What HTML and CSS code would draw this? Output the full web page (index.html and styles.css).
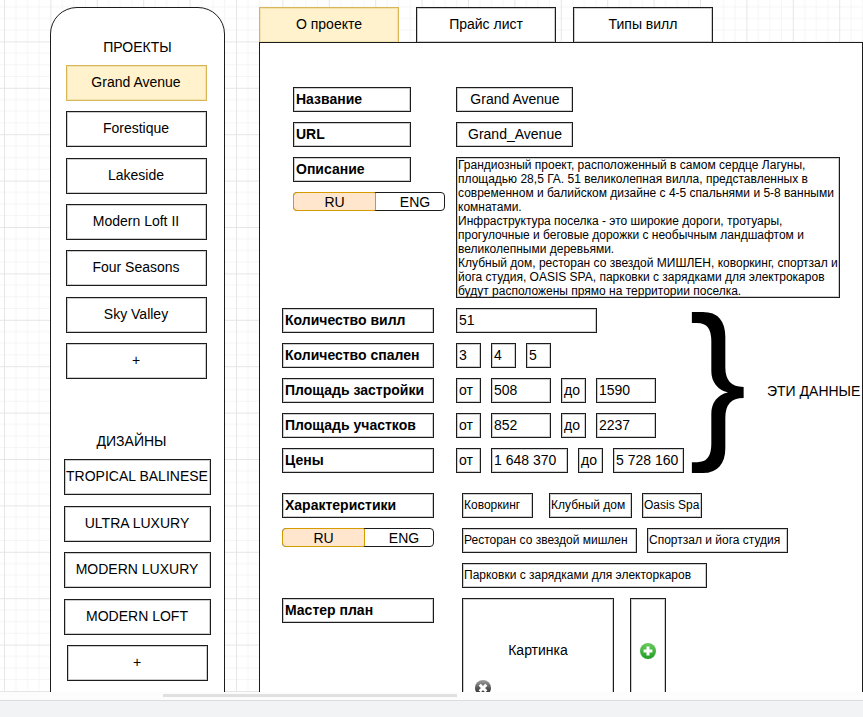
FILE: index.html
```html
<!DOCTYPE html>
<html lang="ru">
<head>
<meta charset="utf-8">
<title>Grand Avenue</title>
<link rel="stylesheet" href="styles.css">
</head>
<body>
<div class="canvas">
  <svg class="grid-lines" aria-hidden="true">
    <defs>
      <pattern id="grid" x="4" y="-5" width="46.4" height="46.4" patternUnits="userSpaceOnUse">
        <path d="M11.9 0V46.4M23.5 0V46.4M35.1 0V46.4M0 11.9H46.4M0 23.5H46.4M0 35.1H46.4" stroke="#f5f5f5" fill="none"/>
        <path d="M.5 0V46.4M0 .5H46.4" stroke="#e6e6e6" fill="none"/>
      </pattern>
    </defs>
    <rect width="100%" height="100%" fill="url(#grid)"/>
  </svg>

  <nav class="sidebar">
    <h2 class="sidebar-title">ПРОЕКТЫ</h2>
    <div class="menu menu-projects">
      <button class="box item active">Grand Avenue</button>
      <button class="box item">Forestique</button>
      <button class="box item">Lakeside</button>
      <button class="box item">Modern Loft II</button>
      <button class="box item">Four Seasons</button>
      <button class="box item">Sky Valley</button>
      <button class="box item" aria-label="Добавить проект">+</button>
    </div>
    <h2 class="sidebar-title designs-title">ДИЗАЙНЫ</h2>
    <div class="menu menu-designs">
      <button class="box item wide">TROPICAL BALINESE</button>
      <button class="box item wide">ULTRA LUXURY</button>
      <button class="box item wide">MODERN LUXURY</button>
      <button class="box item wide">MODERN LOFT</button>
      <button class="box item" aria-label="Добавить дизайн">+</button>
    </div>
  </nav>

  <main class="main">
    <div class="tabs">
      <button class="box item active">О проекте</button>
      <button class="box item">Прайс лист</button>
      <button class="box item">Типы вилл</button>
    </div>
    <form class="panel">
      <section class="section general">
        <div class="stack">
          <label class="box label" for="name">Название</label>
          <label class="box label" for="url">URL</label>
          <label class="box label" for="about">Описание</label>
          <div class="toggle">
            <button type="button" class="lang selected">RU</button>
            <button type="button" class="lang">ENG</button>
          </div>
        </div>
        <div class="stack">
          <input class="box field centered" id="name" value="Grand Avenue">
          <input class="box field centered" id="url" value="Grand_Avenue">
          <textarea class="box about" id="about" rows="10">Грандиозный проект, расположенный в самом сердце Лагуны,
площадью 28,5 ГА. 51 великолепная вилла, представленных в
современном и балийском дизайне с 4-5 спальнями и 5-8 ванными
комнатами.
Инфраструктура поселка - это широкие дороги, тротуары,
прогулочные и беговые дорожки с необычным ландшафтом и
великолепными деревьями.
Клубный дом, ресторан со звездой МИШЛЕН, коворкинг, спортзал и
йога студия, OASIS SPA, парковки с зарядками для электрокаров
будут расположены прямо на территории поселка.</textarea>
        </div>
      </section>

      <section class="section numbers">
        <div class="stack">
          <label class="box label" for="villas">Количество вилл</label>
          <label class="box label" for="bedrooms">Количество спален</label>
          <label class="box label" for="built">Площадь застройки</label>
          <label class="box label" for="plot">Площадь участков</label>
          <label class="box label" for="price">Цены</label>
        </div>
        <div class="stack values">
          <div class="row"><input class="box field large" id="villas" value="51"></div>
          <div class="row">
            <input class="box field tiny" id="bedrooms" value="3">
            <input class="box field tiny" aria-label="Спальни" value="4">
            <input class="box field tiny" aria-label="Спальни" value="5">
          </div>
          <div class="row">
            <span class="box tiny">от</span><input class="box field small" id="built" value="508">
            <span class="box tiny">до</span><input class="box field small" aria-label="Площадь застройки до" value="1590">
          </div>
          <div class="row">
            <span class="box tiny">от</span><input class="box field small" id="plot" value="852">
            <span class="box tiny">до</span><input class="box field small" aria-label="Площадь участков до" value="2237">
          </div>
          <div class="row">
            <span class="box tiny">от</span><input class="box field price-from" id="price" value="1 648 370">
            <span class="box tiny">до</span><input class="box field price-to" aria-label="Цены до" value="5 728 160">
          </div>
        </div>
        <div class="brace">}</div>
        <p class="note">ЭТИ ДАННЫЕ</p>
      </section>

      <section class="section features">
        <div class="stack">
          <div class="box label">Характеристики</div>
          <div class="toggle">
            <button type="button" class="lang selected">RU</button>
            <button type="button" class="lang">ENG</button>
          </div>
        </div>
        <div class="stack">
          <div class="row">
            <span class="box chip coworking">Коворкинг</span>
            <span class="box chip club">Клубный дом</span>
            <span class="box chip spa">Oasis Spa</span>
          </div>
          <div class="row">
            <span class="box chip restaurant">Ресторан со звездой мишлен</span>
            <span class="box chip sport">Спортзал и йога студия</span>
          </div>
          <div class="row"><span class="box chip parking">Парковки с зарядками для электоркаров</span></div>
        </div>
      </section>

      <section class="section plan">
        <div class="stack"><div class="box label">Мастер план</div></div>
        <div class="pictures">
          <div class="box picture">Картинка
            <button type="button" class="icon-button remove" aria-label="Удалить">
              <svg viewBox="0 0 16 16" width="16" height="16">
                <defs><linearGradient id="grey" x2="0" y2="1"><stop stop-color="#a0a0a0"/><stop offset=".6" stop-color="#4a4a4a"/><stop offset="1" stop-color="#333"/></linearGradient></defs>
                <circle cx="8" cy="8" r="8" fill="url(#grey)"/>
                <path d="M4.7 4.7L11.3 11.3M11.3 4.7L4.7 11.3" stroke="#fff" stroke-width="3"/>
              </svg>
            </button>
          </div>
          <button type="button" class="box add" aria-label="Добавить">
            <svg viewBox="0 0 16 16" width="16" height="16">
              <defs><linearGradient id="green" x2="0" y2="1"><stop stop-color="#6ccb62"/><stop offset="1" stop-color="#1f9d22"/></linearGradient></defs>
              <circle cx="8" cy="8" r="8" fill="url(#green)"/>
              <path d="M8 3.6V12.4M3.6 8H12.4" stroke="#fff" stroke-width="3"/>
            </svg>
          </button>
        </div>
      </section>
    </form>
  </main>
</div>
<div class="scroll-track"><div class="scroll-thumb"></div></div>
<footer class="bottom-bar"></footer>
</body>
</html>
```
FILE: styles.css
```css
* {
  box-sizing: border-box;
}

body {
  margin: 0;
  height: 100vh;
  display: flex;
  flex-direction: column;
  overflow: hidden;
  background: #fff;
  color: #000;
  font: 14px/20px "Liberation Sans", Arial, sans-serif;
}

button, input, textarea {
  margin: 0;
  font: inherit;
  color: inherit;
}

.canvas {
  position: relative;
  flex: 1;
  min-height: 0;
  display: flex;
  align-items: stretch;
  gap: 34px;
  padding: 7px 0 0 50px;
  overflow: hidden;
}

.grid-lines {
  position: absolute;
  inset: 0;
  width: 100%;
  height: 100%;
}

.box {
  display: flex;
  align-items: center;
  border: 1px solid #1c1c1c;
  border-radius: 0;
  box-shadow: inset 0 0 0 1px #0003;
  background: #fff;
  white-space: nowrap;
}

/* Sidebar */
.sidebar {
  position: relative;
  flex: none;
  width: 175px;
  height: 800px;
  padding-top: 29px;
  border: 1px solid #1c1c1c;
  border-radius: 27px;
  background: #fff;
}

.sidebar-title {
  margin: 0 0 8px;
  font-size: 14px;
  font-weight: normal;
  text-align: center;
}

.designs-title {
  margin-top: 52px;
  padding-right: 12px;
}

.menu {
  display: flex;
  flex-direction: column;
  align-items: center;
  justify-content: space-between;
}

.menu-projects {
  min-height: 314px;
  padding-right: 3px;
}

.menu-designs {
  min-height: 222px;
  padding-right: 1px;
}

.item {
  justify-content: center;
  width: 141px;
  height: 36px;
  padding: 0 0 2px;
}

.wide {
  width: 147px;
}

.active {
  border-color: #d6b656;
  background: #fff2cc;
  box-shadow: inset 0 0 0 1px #d6b65640;
}

/* Main panel */
.main {
  position: relative;
  flex: 1;
  min-width: 0;
}

.tabs {
  display: flex;
  gap: 17px;
}

.tabs .item {
  width: 140px;
}

.panel {
  height: 800px;
  margin-top: -1px;
  padding-top: 44px;
  border: 1px solid #1c1c1c;
  background: #fff;
}

.tabs .active {
  height: 35px;
  border-bottom: 0;
}

.section {
  display: flex;
  padding-left: 22px;
}

.stack {
  display: flex;
  flex-direction: column;
  gap: 10px;
}

.row {
  display: flex;
  gap: 10px;
}

.label,
.field,
.tiny,
.chip {
  height: 25px;
  padding: 0 1px 2px 2px;
}

.label {
  width: 152px;
  font-weight: bold;
}

.general {
  gap: 11px;
  padding-left: 33px;
}

.general .label {
  width: 118px;
}

.centered {
  width: 117px;
  text-align: center;
}

.about {
  display: block;
  width: 384px;
  height: 141px;
  padding: 0 1px;
  overflow: hidden;
  resize: none;
  font-size: 12px;
  line-height: 14px;
}

.toggle {
  display: flex;
  width: 152px;
  height: 19px;
  border: 1px solid #1c1c1c;
  border-radius: 4px;
  background: #fff;
}

.lang {
  flex: 1;
  padding: 1px 0 0 10px;
  border: 0;
  background: none;
  line-height: 17px;
}

.selected {
  flex: none;
  width: 83px;
  margin: -1px 0 -1px -1px;
  padding: 1px 0 0;
  border: 1px solid #d79b00;
  border-radius: 4px 2px 2px 4px;
  background: #ffe6cc;
}

.numbers {
  align-items: center;
  height: 165px;
  margin-top: 10px;
}

.values {
  width: 233px;
  margin-left: 22px;
}

.large {
  width: 141px;
}

.tiny {
  width: 25px;
}

.small {
  width: 60px;
}

.price-from {
  width: 77px;
}

.price-to {
  width: 71px;
}

.brace {
  width: 59px;
  height: 165px;
  font-size: 173px;
  line-height: 138px;
}

.note {
  margin: 0 0 0 19px;
  white-space: nowrap;
}

.features {
  gap: 28px;
  margin-top: 20px;
}

.chip {
  padding-left: 1px;
  font-size: 12px;
}

.coworking {
  width: 71px;
  margin-right: 6px;
}

.club {
  width: 83px;
}

.spa {
  width: 60px;
}

.restaurant {
  width: 175px;
}

.sport {
  width: 141px;
}

.parking {
  width: 245px;
}

.plan {
  gap: 28px;
  margin-top: 10px;
}

.pictures {
  display: flex;
  gap: 16px;
}

.picture {
  position: relative;
  justify-content: center;
  width: 152px;
  height: 105px;
  padding-bottom: 2px;
}

.add {
  justify-content: center;
  width: 36px;
  height: 105px;
  padding: 0;
}

.icon-button {
  display: flex;
  padding: 0;
  border: 0;
  background: none;
}

.remove {
  position: absolute;
  left: 12px;
  bottom: 6px;
}

/* Window bottom */
.scroll-track {
  flex: none;
  height: 8px;
  padding: 2px 0 0 163px;
  background: #fcfcfc;
}

.scroll-thumb {
  width: 42%;
  height: 3px;
  background: #e0e0e0;
}

.bottom-bar {
  flex: none;
  height: 17px;
  border-top: 1px solid #dadce0;
  background: #f1f3f4;
}
```
